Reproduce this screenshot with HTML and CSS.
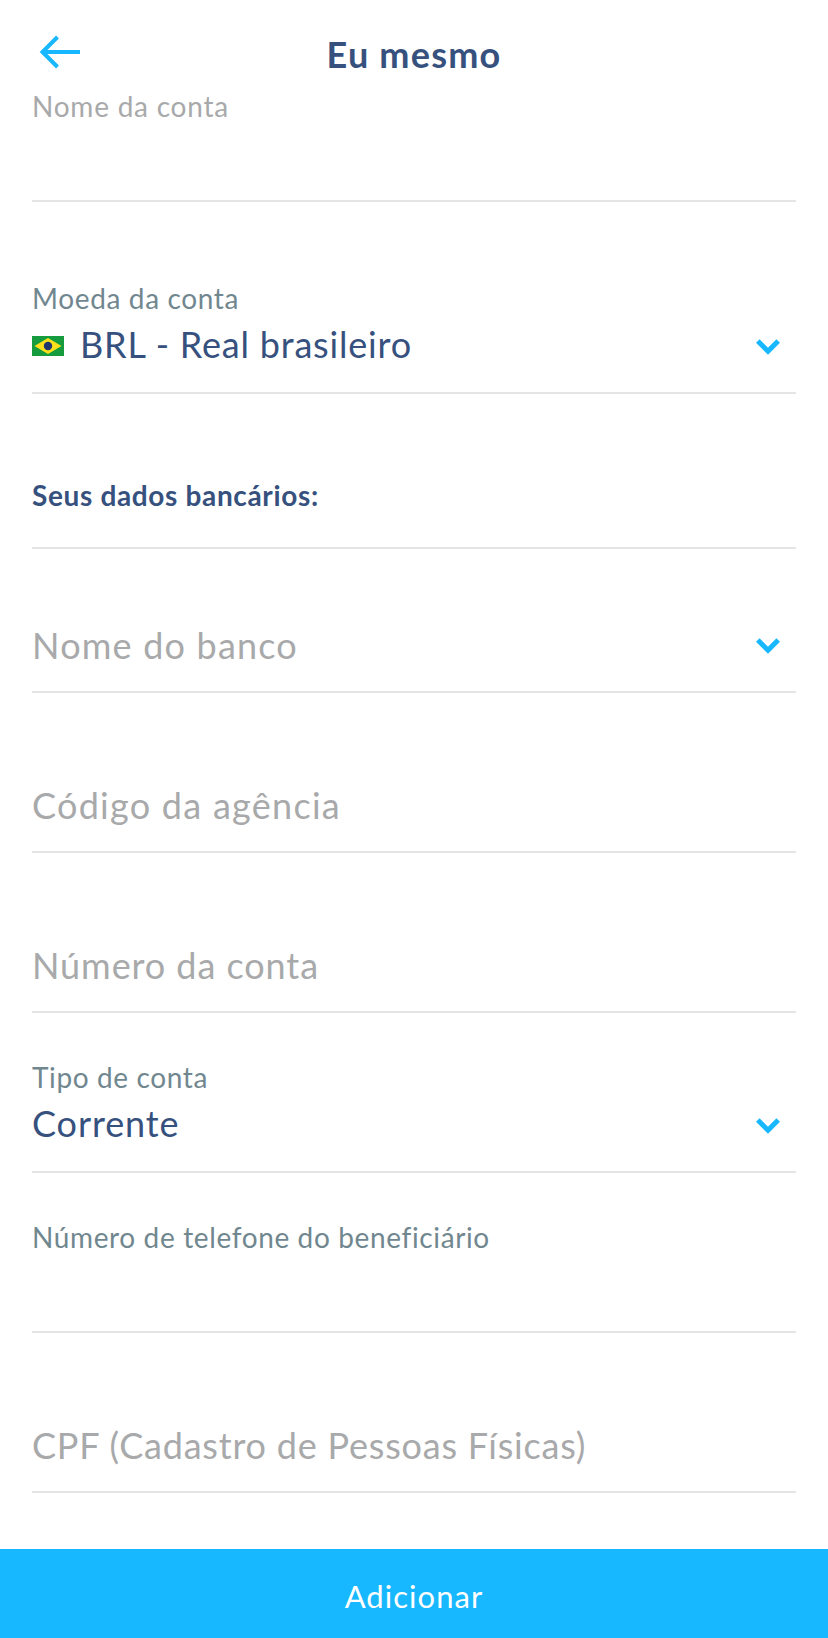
FILE: index.html
```html
<!DOCTYPE html>
<html lang="pt-BR">
<head>
<meta charset="utf-8">
<meta name="viewport" content="width=device-width">
<title>Eu mesmo</title>
<link rel="stylesheet" href="styles.css">
</head>
<body>
<header class="header">
  <svg class="back" viewBox="0 0 42 34" width="42" height="34"><path d="M41 17H4M18.500 2L3.500 17l15 15"/></svg>
  <h1 class="title"><span class="t-title">Eu mesmo</span></h1>
</header>
<main class="form">
  <section class="field account"><span class="label muted"><span class="t-name">Nome da conta</span></span></section>
  <section class="field currency">
    <span class="label"><span class="t-currency">Moeda da conta</span></span>
    <div class="value">
      <svg class="flag" viewBox="0 0 32 20" width="32" height="20"><path fill="#169b3e" d="M0 0h32v20H0z"/><path fill="#ffe01b" d="M16 2l13.500 8L16 18 2.500 10z"/><circle cx="16" cy="10" r="4.200" fill="#20366f"/></svg>
      <span class="t-brl">BRL - Real brasileiro</span>
      <svg class="chevron" viewBox="0 0 24 16" width="24" height="16"><path d="M1.800 2L12 12.200 22.200 2"/></svg>
    </div>
  </section>
  <section class="field heading"><h2 class="subtitle"><span class="t-bank-data">Seus dados bancários:</span></h2></section>
  <section class="field bank"><div class="value muted"><span class="t-bank">Nome do banco</span><svg class="chevron" viewBox="0 0 24 16" width="24" height="16"><path d="M1.800 2L12 12.200 22.200 2"/></svg></div></section>
  <section class="field regular"><div class="value muted"><span class="t-branch">Código da agência</span></div></section>
  <section class="field regular"><div class="value muted"><span class="t-number">Número da conta</span></div></section>
  <section class="field regular">
    <span class="label"><span class="t-type">Tipo de conta</span></span>
    <div class="value"><span class="t-current">Corrente</span><svg class="chevron" viewBox="0 0 24 16" width="24" height="16"><path d="M1.800 2L12 12.200 22.200 2"/></svg></div>
  </section>
  <section class="field phone"><span class="label"><span class="t-phone">Número de telefone do beneficiário</span></span></section>
  <section class="field regular"><div class="value muted"><span class="t-cpf">CPF (Cadastro de Pessoas Físicas)</span></div></section>
</main>
<button class="submit"><span class="t-add">Adicionar</span></button>
</body>
</html>
```
FILE: styles.css
```css
* { box-sizing: border-box; }
body { margin: 0; height: 1638px; display: flex; flex-direction: column; background: #fff; color: #37517e; font-family: Lato, sans-serif; }
.header { height: 89px; flex: none; display: grid; grid-template-columns: 100px 1fr 100px; padding-top: 34px; }
.back { margin: 1px 0 0 39px; fill: none; stroke: #17b8ff; stroke-width: 4; }
.title { margin: 0; font-size: 36px; line-height: 40px; text-align: center; }
.form { flex: 1; padding: 0 32px; }
.field { display: flex; flex-direction: column; justify-content: flex-end; height: 160px; border-bottom: 2px solid #e4e5e5; }
.account { height: 113px; justify-content: flex-start; }
.currency { height: 192px; }
.heading { height: 155px; }
.bank { height: 144px; }
.phone { justify-content: flex-start; padding-top: 47px; }
.label { height: 34px; line-height: 34px; font-size: 28px; color: #71878f; white-space: nowrap; }
.value { display: flex; align-items: center; height: 64px; padding: 0 16px 4px 0; margin-bottom: 12px; font-size: 36px; line-height: 46px; white-space: nowrap; }
.label + .value { height: 59px; padding-bottom: 2px; margin-bottom: 18px; }
.muted { color: #a8a9aa; }
.subtitle { margin: 0 0 35px; font-size: 28px; line-height: 34px; }
.flag { margin: 4px 16px 0 0; }
.chevron { margin: 2px 0 0 auto; fill: none; stroke: #17b8ff; stroke-width: 5; }
.label + .value .chevron { margin-top: 6px; }
.submit { height: 89px; flex: none; padding: 5px 0 0; border: 0; background: #17b8ff; color: #fff; font: 31px Lato, sans-serif; }

/* Tracking for each string */
.t-title { letter-spacing: 1.2px; }
.t-name { letter-spacing: .77px; }
.t-currency { letter-spacing: .64px; }
.t-brl { letter-spacing: .8px; }
.t-bank-data { letter-spacing: .65px; }
.t-bank { letter-spacing: 1.2px; }
.t-branch { letter-spacing: 1.27px; }
.t-number { letter-spacing: .93px; }
.t-type { letter-spacing: .62px; }
.t-current { letter-spacing: .9px; }
.t-phone { letter-spacing: .63px; }
.t-cpf { letter-spacing: .79px; }
.t-add { letter-spacing: 1.05px; }
```
